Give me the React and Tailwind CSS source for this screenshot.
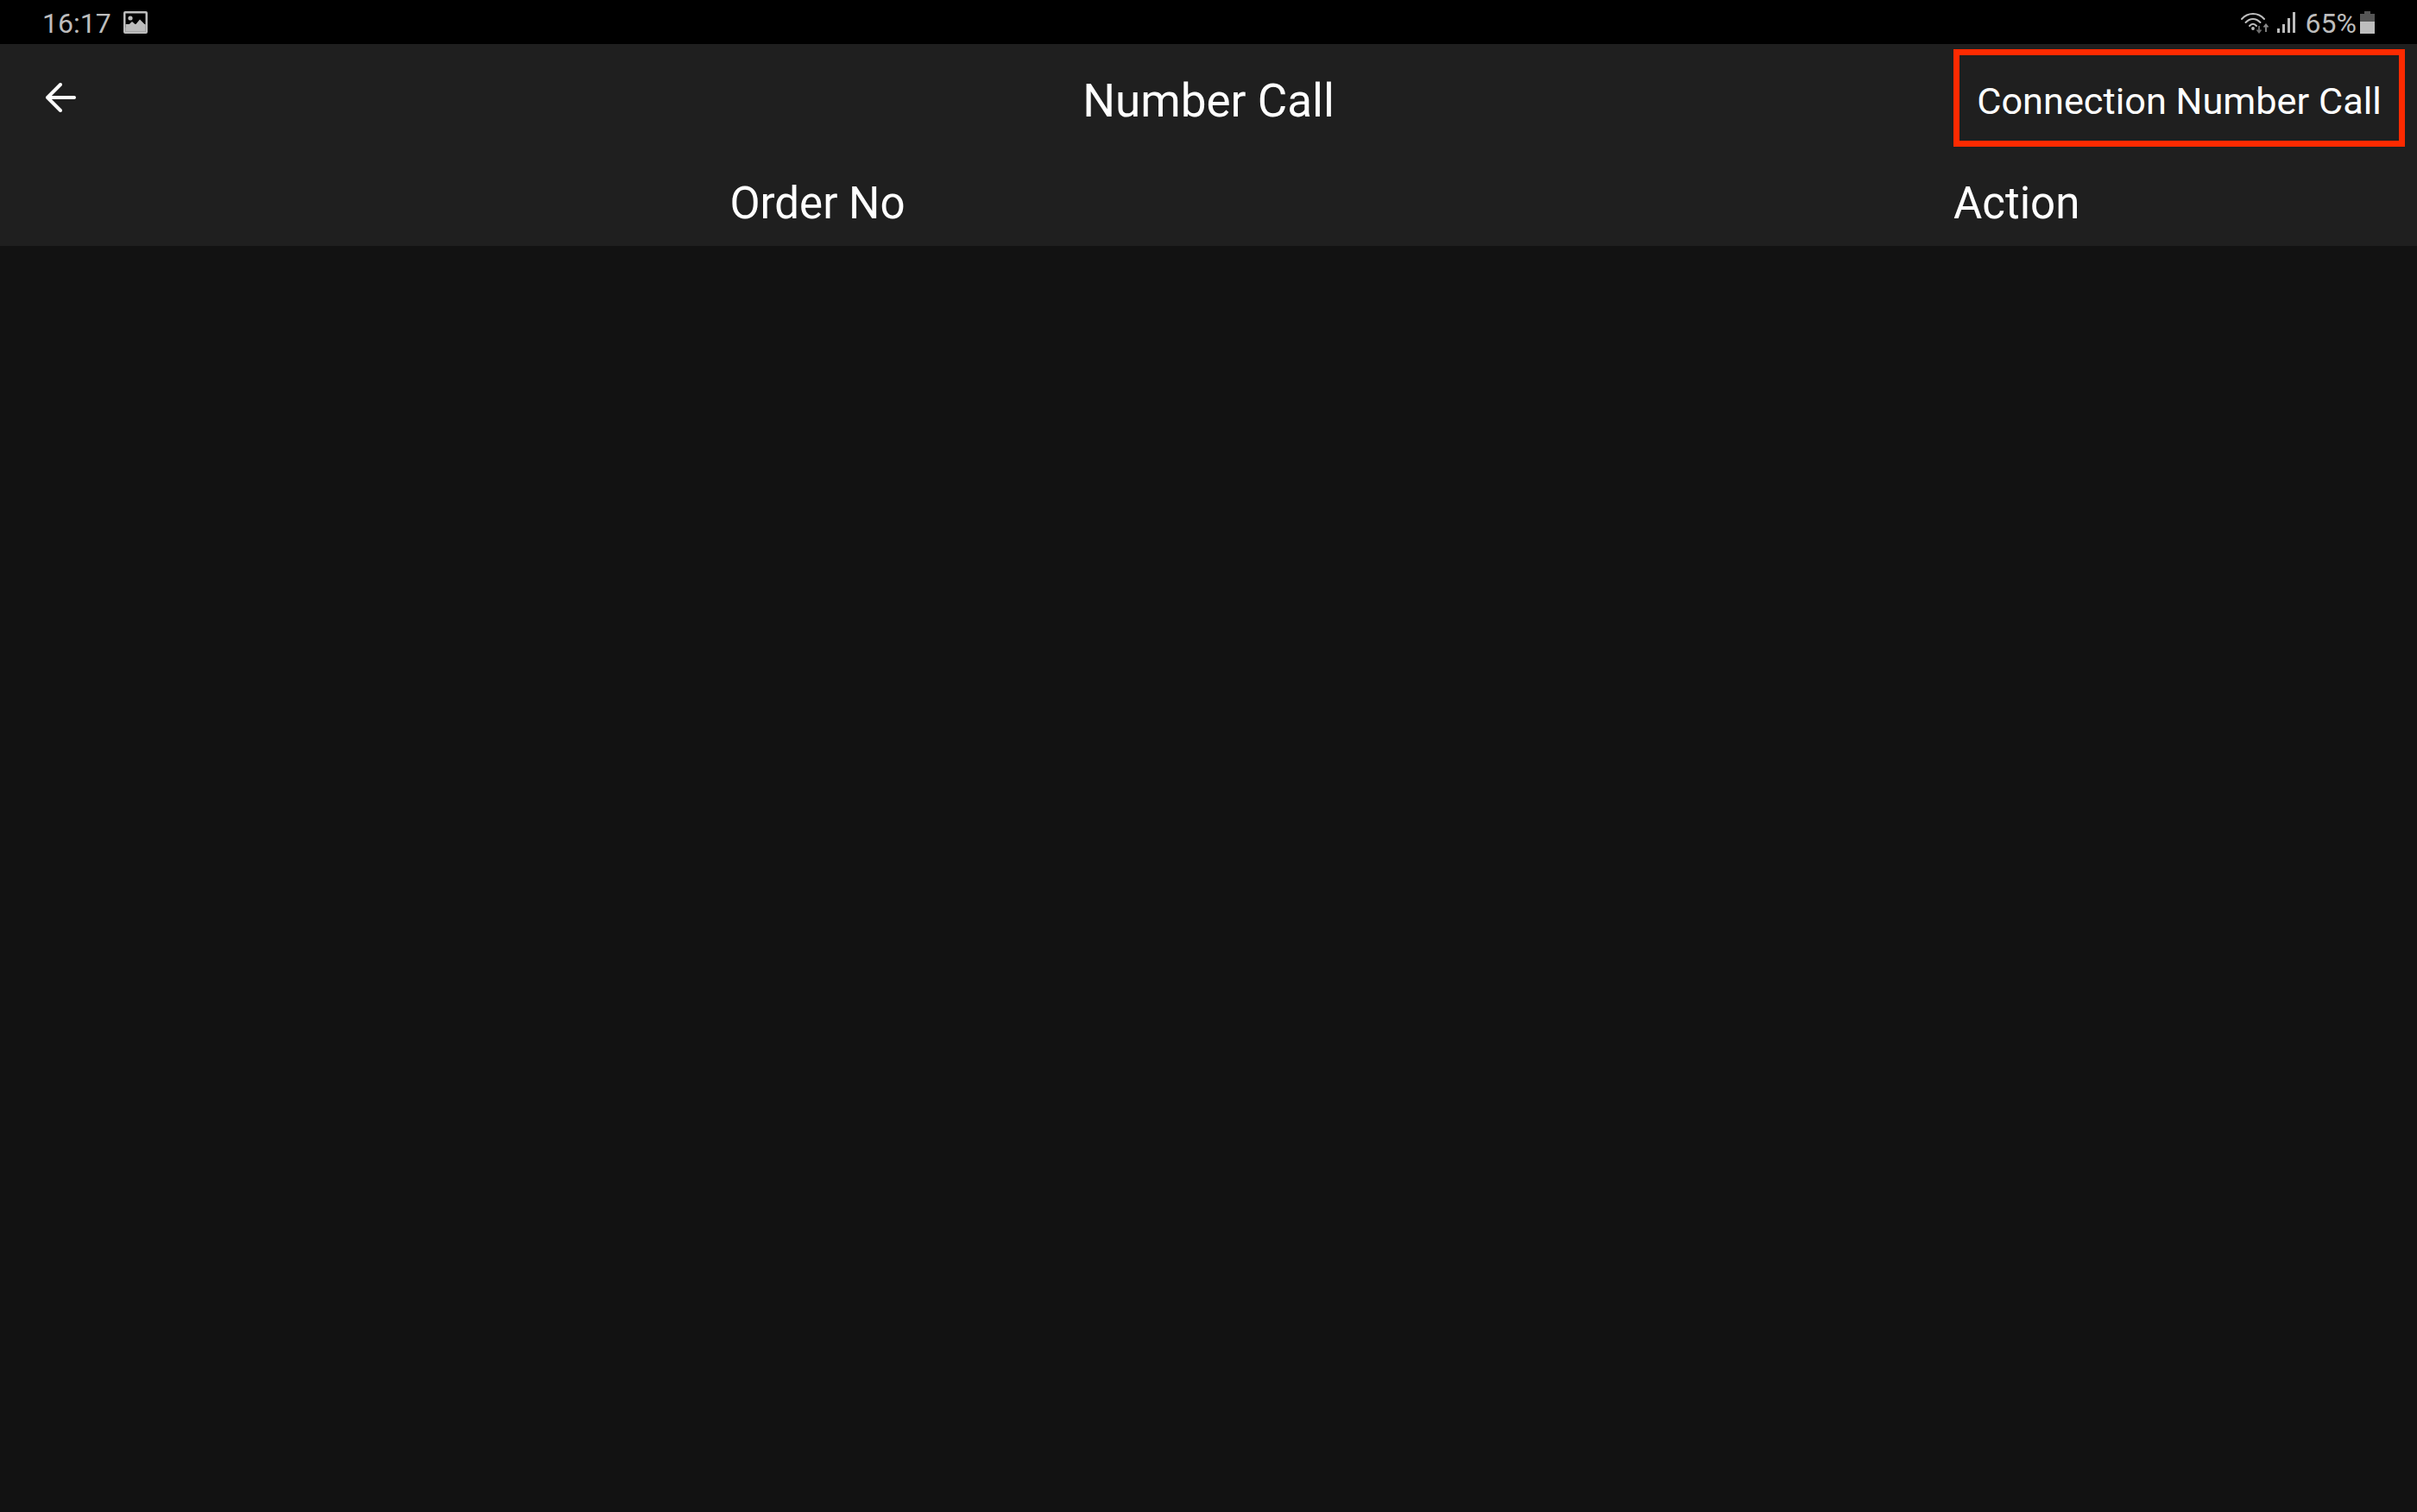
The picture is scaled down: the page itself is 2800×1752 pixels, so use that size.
import React from 'react';

const GRAY = '#bdbdbd';

const ImageIcon = () => (
  <svg width="28" height="26" viewBox="0 0 28 26" className="block">
    <rect width="28" height="26" rx="2" fill={GRAY} />
    <rect x="2.5" y="2.5" width="23" height="21" fill="#000" />
    <rect x="2.5" y="15" width="23" height="8.5" fill={GRAY} />
    <path d="M2.5 19 L10 12 L14 15.5 L19 9.5 L25.5 16 L25.5 23.5 L2.5 23.5 Z" fill={GRAY} />
    <circle cx="8" cy="8" r="2.6" fill={GRAY} />
  </svg>
);

const WifiIcon = () => (
  <svg width="34" height="26" viewBox="0 0 34 26" className="block">
    <g fill="none" stroke={GRAY} strokeWidth="2" strokeLinecap="round">
      <path d="M1 9 C8 1 20 1 27 9" />
      <path d="M5.5 13 C10.5 7.5 17.5 7.5 22.5 13" />
      <path d="M10 17 C12.5 14 15.5 14 18 17" />
    </g>
    <circle cx="14" cy="20" r="1.9" fill={GRAY} />
    <path d="M21 17 V24 M18.5 21.5 L21 24.5 L23.5 21.5" fill="none" stroke="#6e6e6e" strokeWidth="1.8" />
    <path d="M29 24 V16 M26.5 18.5 L29 15.5 L31.5 18.5" fill="none" stroke="#8a8a8a" strokeWidth="1.8" />
  </svg>
);

const SignalIcon = () => (
  <svg width="22" height="24" viewBox="0 0 22 24" className="block">
    <rect x="0" y="19" width="3" height="5" fill={GRAY} />
    <rect x="6" y="14" width="3" height="10" fill={GRAY} />
    <rect x="12" y="7" width="3" height="17" fill={GRAY} />
    <rect x="18" y="0" width="3" height="24" fill={GRAY} />
  </svg>
);

const BatteryIcon = () => (
  <svg width="17" height="26" viewBox="0 0 17 26" className="block">
    <rect x="5" y="0" width="7" height="3" fill="#555" />
    <rect x="0" y="3" width="17" height="9" fill="#555" />
    <rect x="0" y="12" width="17" height="14" fill={GRAY} />
  </svg>
);

const BackArrow = () => (
  <svg width="36" height="34" viewBox="0 0 36 34" className="block">
    <path d="M34 17 H3 M18 2 L3 17 L18 32" fill="none" stroke="#fff" strokeWidth="4" strokeLinecap="round" strokeLinejoin="round" />
  </svg>
);

export default function App() {
  return (
    <div className="flex flex-col w-[2800px] h-[1752px] bg-[#121212] font-['Roboto',sans-serif] text-white overflow-hidden">
      {/* status bar */}
      <div className="flex items-center justify-between h-[51px] bg-black pl-[49px] pr-[49px] text-[#bdbdbd] text-[32px]">
        <div className="flex items-center gap-[14px]">
          <span className="pt-[2px]">16:17</span>
          <ImageIcon />
        </div>
        <div className="flex items-center">
          <WifiIcon />
          <div className="ml-[8px]"><SignalIcon /></div>
          <span className="ml-[11px] pt-[2px]">65%</span>
          <div className="ml-[4px]"><BatteryIcon /></div>
        </div>
      </div>

      {/* header */}
      <div className="flex flex-col h-[234px] bg-[#1f1f1f]">
        <div className="grid grid-cols-[1fr_auto_1fr] items-center h-[130px]">
          <div className="pl-[52px] pb-[6px]"><BackArrow /></div>
          <h1 className="pt-[4px] text-[53px] font-normal">Number Call</h1>
          <div className="flex justify-end pr-[14px] pb-[5px]">
            <div className="flex items-center justify-center w-[523px] h-[113px] pt-[9px] border-[7px] border-[#ff2a00] text-[43.3px]">
              Connection Number Call
            </div>
          </div>
        </div>
        <div className="flex items-center h-[104px] pt-[6px] text-[51px]">
          <div className="w-[1894px] text-center">Order No</div>
          <div className="pl-[369px]">Action</div>
        </div>
      </div>
    </div>
  );
}
